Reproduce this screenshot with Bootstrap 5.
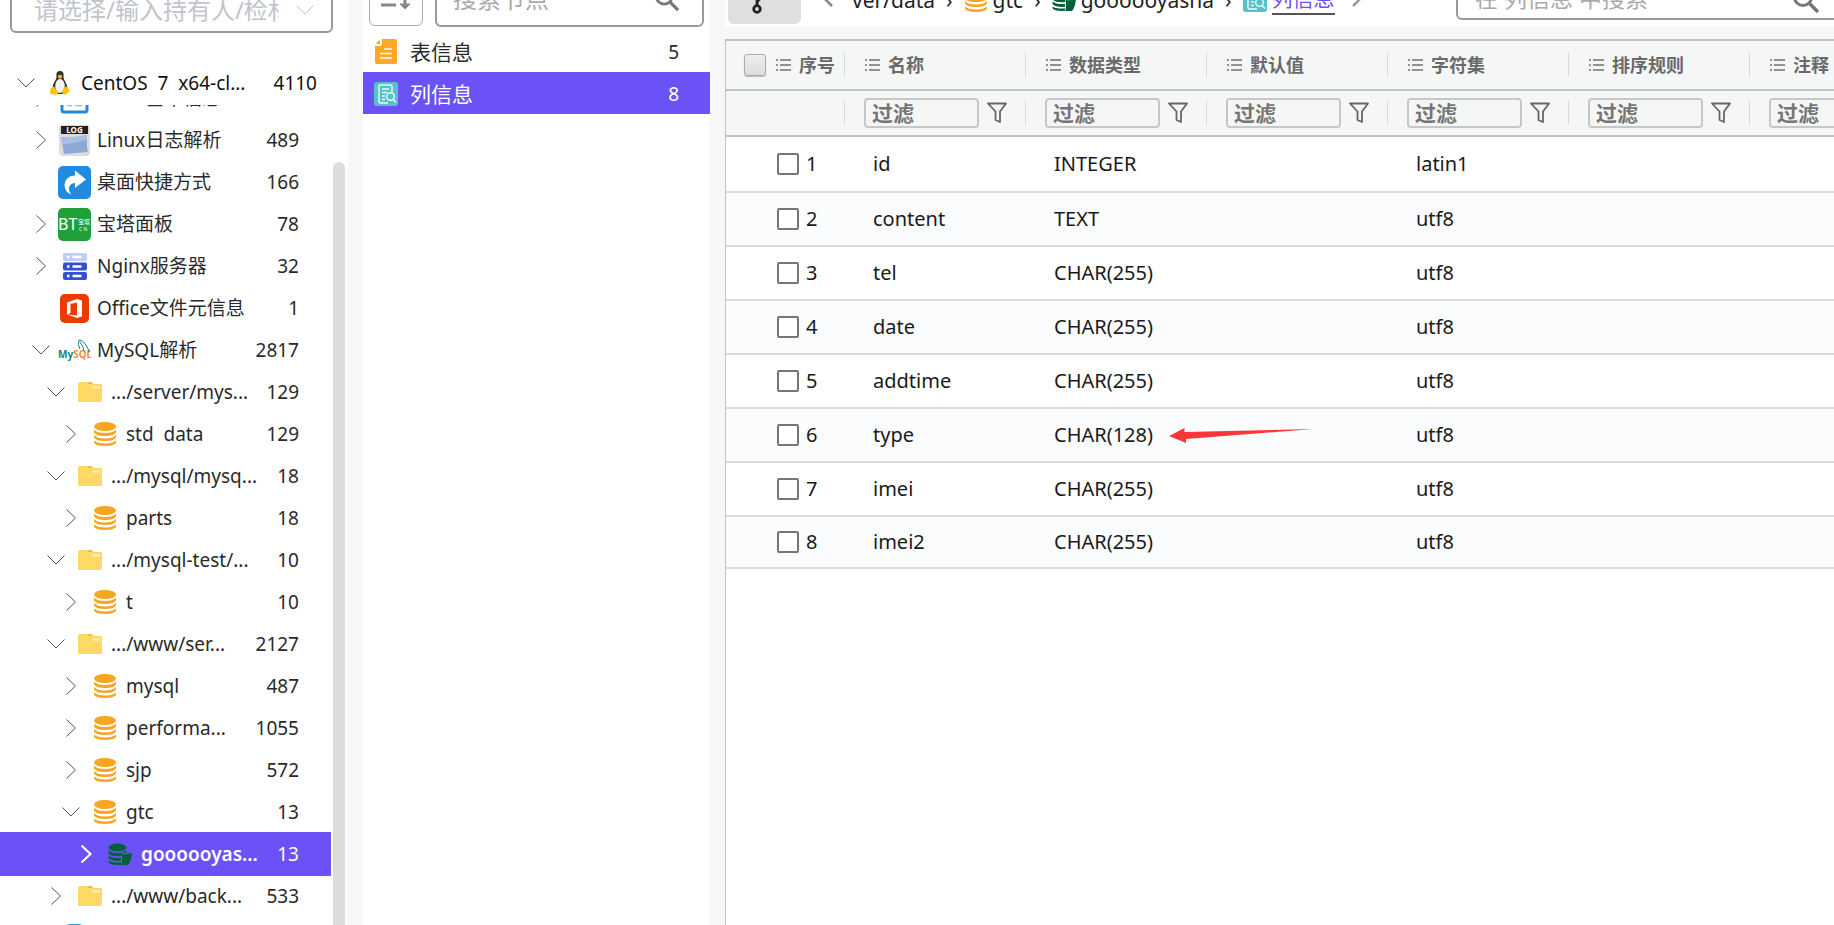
<!DOCTYPE html>
<html lang="zh-CN">
<head>
<meta charset="utf-8">
<meta name="viewport" content="width=device-width, initial-scale=1">
<title>列信息</title>
<link href="https://cdn.jsdelivr.net/npm/bootstrap@5.3.0/dist/css/bootstrap.min.css" rel="stylesheet">
<style>
:root{--accent:#6b52f6;--line:#bdc3c7}
body{background:#f7f7f7;color:#2a2a2a;font-family:"Noto Sans","Noto Sans CJK SC",sans-serif;font-size:19px;line-height:28px}
svg{flex:none;display:block}
a{color:inherit;text-decoration:none}
input::placeholder{opacity:1}
.bare{border:0;background:none;padding:0;outline:0;min-width:0}
/* holder tree */
.side{width:348px}
.side-top{height:33px;padding:0 15px 0 10px}
.combo{height:46px;border:2px solid #999;border-radius:6px;padding:0 17px 0 22px}
.combo input{font-size:24px;color:#c0c4cc;width:245px}
.combo input::placeholder{color:#c0c4cc}
.rootrow{height:45px;padding:0 16px 0 17px;margin-top:27px;margin-right:15px;color:#111}
.tree{width:330px}
.track{width:12px;background:#dcdcdc;border-radius:6px 6px 0 0;margin:57px 3px 0 0}
.peek{height:14px}
.trow{height:42px;padding-right:31px;width:330px;white-space:nowrap}
.l1{padding-left:32px}.l2{padding-left:47px}.l3{padding-left:62px}.l4{padding-left:77px}
.chev{width:18px;height:18px;fill:none;stroke:#555;stroke-width:1}
.big{width:33px;height:33px;margin:0 6px 0 8px}
.small-ic{width:24px;height:26px;margin:0 9px 0 13px}
.picked{background:var(--accent);color:#fff}
.trow.picked{box-shadow:0 0 0 1px var(--accent)}
.trow.picked span:first-of-type{font-weight:600}
.picked .chev{stroke:#fff;stroke-width:2}
/* node list */
.nodes{width:347px;margin:0 15px}
.nodes-top{height:27px;padding:0 6px}
.sort{width:54px;height:56px;border:1px solid #aaa;border-radius:6px;margin-bottom:1px;padding:0}
.find{border:2px solid #999;border-radius:6px;color:#777}
.find input{font-size:24px;color:#aaa}
.find input::placeholder{color:#aaa}
.find-node{height:56px;padding:0 22px 0 16px;margin-left:12px}
.nrow{height:42px;padding:2px 31px 0 11px;font-size:21px}
.nrow .ms-auto{font-size:19px}
.nrow.picked{color:#fff}
.nrow svg{width:24px;height:26px;margin-right:12px}
/* path bar */
.pathbar{height:27px;font-size:21px;line-height:30px;white-space:nowrap}
.branch{width:73px;height:60px;background:#dfdfdf;border:0;border-radius:6px;margin:0 0 3px 3px;padding:0}
.crumbs{margin-bottom:12px;padding-left:20px;color:#222}
.crumbs svg{margin-bottom:2px}
.crumbs a{margin-left:5px}
.sep{padding:0 11px}
.now{color:var(--accent);border-bottom:2px solid #555}
.find-col{width:400px;height:44px;margin:0 -22px 7px 0;padding:0 34px 0 17px}
.find-col input{font-size:23px}
/* grid */
.gridbox{margin-top:12px;border-left:1px solid var(--line)}
.grid{width:1205px;table-layout:fixed;border-collapse:separate;border-spacing:0;color:#1a1a1a;font-size:20px}
.grid th{background:#f5f7f7;border-bottom:2px solid var(--line);padding:0;color:#6a6a6a;font-size:18px;font-weight:700}
.heads th{border-top:2px solid var(--line);height:52px}
.filters th{height:46px}
.slot{height:24px;padding-left:20px;border-right:1px solid #d5d8da}
.grid th:first-child .slot{padding-left:18px}
.grid td{height:54px;padding:0 0 0 28px;border-bottom:2px solid #d9dcdf;background:#fff}
.grid td:first-child{padding-left:51px}
.grid tbody tr:first-child td{height:56px}
.grid tbody tr:last-child td{height:52px}
.grid tbody tr:nth-child(even) td{background:#fbfcfe}
.tick{appearance:none;width:22px;height:22px;border:2px solid #767676;border-radius:2px;margin:0 7px 0 0;background:#fff;flex:none}
.tick-all{border:1px solid #aaa;border-radius:3px;background:linear-gradient(#eee,#dcdcdc);box-shadow:0 1px 1px #bbb;margin-right:10px}
.filt{width:115px;height:30px;border:2px solid #c6c8c8;border-radius:4px;background:#f5f7f7;padding:0 6px;font-size:21px;font-weight:700;color:#757575;margin-left:-1px}
.filt::placeholder{color:#757575}
.funnel{width:20px;height:22px;margin-left:8px}
.pointer{left:143px;top:18px}
</style>
</head>
<body>
<svg width="0" height="0" class="position-absolute" aria-hidden="true">
<symbol id="dn" viewBox="0 0 18 18"><path d="M.5 4.500 9 13l8.500-8.500"/></symbol>
<symbol id="rt" viewBox="0 0 18 18"><path d="M4.500 .500 13.500 9l-9 8.500"/></symbol>
<symbol id="folder" viewBox="0 0 24 26"><path d="M0 4.500q0-1.500 1.500-1.500H13l3 2h7q1 0 1 1v16q0 1-1 1H1q-1 0-1-1z" fill="#ffd966"/><path d="M9 3h4l2 2h-5z" fill="#f6b15c"/><path d="M14.500 7.500h7v2h-7z" fill="#fff3cf"/></symbol>
<symbol id="db" viewBox="0 0 24 26"><g fill="#f6a623"><ellipse cx="12" cy="5.500" rx="11" ry="4.500"/><path d="M1 8.500q3 3.500 11 3.500t11-3.500v3q-2 3.500-11 3.500T1 11.500zM1 14q3 3.500 11 3.500T23 14v2.500q-2 3.500-11 3.500T1 16.500zM1 19.500q3 3 11 3t11-3V22q-2 3-11 3T1 22z"/></g></symbol>
<symbol id="tbl" viewBox="0 0 24 26"><g fill="#05603a"><ellipse cx="9.500" cy="6.500" rx="9" ry="4"/><path d="M.5 9q2 3 9 3t9-3v3h-5v3q-11 1-13-3zM.5 14.500q3 3 12.500 2.500v3q-10 .500-12.500-3zM.5 19.500q3 2.500 13 2v2.300q-11 .700-13-2.500z"/><path d="M14 13q5 .500 10-1-1 9-4 12h-6z"/></g></symbol>
<symbol id="cols" viewBox="0 0 24 26"><rect y="1" width="24" height="24" rx="3" fill="#56c1c7"/><g fill="none" stroke="#e6ffff" stroke-width="1.400"><path d="M14 22H6.500Q5 22 5 20.500v-15Q5 4 6.500 4h10Q18 4 18 5.500V11M8 8h7M8 11.500h5M8 15h3M8 18.500h3"/><circle cx="16.500" cy="15.500" r="3.800"/><path d="m19 18.500 3 3"/></g></symbol>
<symbol id="doc" viewBox="0 0 24 26"><path d="M8 0h13q2 0 2 2v21q0 2-2 2H3q-2 0-2-2V7h5q2 0 2-2z" fill="#ffa726"/><path d="M1.500 5 6 .500V5z" fill="#ffa726"/><path d="M10 10h8M6 14.500h12M6 19h12" stroke="#fff" stroke-width="1.600"/></symbol>
<symbol id="list" viewBox="0 0 15 14"><path d="M0 2h2M0 7h2M0 12h2M4 2h11M4 7h11M4 12h11" stroke="#707070" stroke-width="1.500"/></symbol>
<symbol id="fun" viewBox="0 0 20 22"><path d="M1 1.500h18L13 9.500V20l-4.500-2V9.500z" fill="none" stroke="#666" stroke-width="1.800" stroke-linejoin="round"/></symbol>
<symbol id="mag" viewBox="0 0 28 28"><circle cx="11" cy="11" r="8.500" fill="none" stroke="currentColor" stroke-width="3"/><path d="m17 17 9 9" stroke="currentColor" stroke-width="3.500"/></symbol>
</svg>

<div class="d-flex vh-100 overflow-hidden">
<aside class="side bg-white flex-shrink-0 d-flex flex-column">
  <div class="side-top d-flex align-items-end overflow-hidden flex-shrink-0">
    <div class="combo d-flex align-items-center justify-content-between flex-fill">
      <input class="bare" aria-label="持有人" placeholder="请选择/输入持有人/检材">
      <svg class="chev" style="stroke:#c0c4cc"><use href="#dn"/></svg>
    </div>
  </div>
  <a href="#" class="rootrow d-flex align-items-center flex-shrink-0">
    <svg class="chev"><use href="#dn"/></svg>
    <svg width="20" height="24" viewBox="0 0 20 24" style="margin:0 11px 0 15px"><path d="M10 0C7 0 6 2 6.500 6c0 3-4 6-4 12l4 5h7l4-5c0-5-4-9-4-12C14 2 13 0 10 0z" fill="#2d3436"/><ellipse cx="10" cy="15" rx="4.800" ry="7" fill="#f4f4f4"/><path d="M8 4.500q2-1.500 4 0v2l-2 1.500-2-1.500z" fill="#f7b500"/><path d="M4 15.500 8.500 22q-1 2.500-4 1.500l-4.500-1 .500-5zM16 15.500l-3.500 3v4q1 2 3.500 1l4-3.500-2.500-4z" fill="#ffc107"/></svg>
    <span>CentOS&nbsp; 7&nbsp; x64-cl...</span><span class="ms-auto">4110</span>
  </a>
  <div class="d-flex flex-fill overflow-hidden justify-content-between" style="min-height:0">
  <nav class="tree">
    <div class="peek overflow-hidden d-flex align-items-end"><a href="#" class="trow l1 d-flex align-items-center flex-shrink-0"><svg class="chev"><use href="#rt"/></svg><svg class="big" viewBox="0 0 33 33"><rect x="4" y="4" width="25" height="26" rx="2" fill="#fff" stroke="#2389e0" stroke-width="3"/><path d="M9 23.500h5M17 23.500h7" stroke="#8ec5f3" stroke-width="2"/></svg><span>Linux基本信息</span></a></div>
    <a href="#" class="trow l1 d-flex align-items-center"><svg class="chev"><use href="#rt"/></svg><svg class="big" viewBox="0 0 33 33"><rect x="1" y="1" width="31" height="31" rx="4" fill="#dcdcdc"/><path d="M3 2h27v8H3z" fill="#222"/><text x="16.500" y="9" font-size="8" font-weight="700" fill="#fff" text-anchor="middle">LOG</text><path d="M3 13q13 1 26-2v12l1 5-24 2z" fill="#8ea9d8"/><path d="M3 13q13 1 26-2v5L4 21z" fill="#a9bfe4"/></svg><span>Linux日志解析</span><span class="ms-auto">489</span></a>
    <a href="#" class="trow l1 d-flex align-items-center"><span style="width:18px"></span><svg class="big" viewBox="0 0 33 33"><rect width="33" height="33" rx="5" fill="#218be0"/><path d="M17 4.500 28 13.500 17 22v-5q-6 .500-6 6 0 3 2.500 5.500-7-2-7-9.500Q7 10 17 9.500z" fill="#fff"/></svg><span>桌面快捷方式</span><span class="ms-auto">166</span></a>
    <a href="#" class="trow l1 d-flex align-items-center"><svg class="chev"><use href="#rt"/></svg><svg class="big" viewBox="0 0 33 33"><rect width="33" height="33" rx="5" fill="#1fa038"/><text x="0" y="22" font-size="16" fill="#fff">BT</text><text x="20" y="16" font-size="6" fill="#fff">宝塔</text><text x="21" y="23" font-size="5" fill="#fff">C N</text></svg><span>宝塔面板</span><span class="ms-auto">78</span></a>
    <a href="#" class="trow l1 d-flex align-items-center"><svg class="chev"><use href="#rt"/></svg><svg class="big" viewBox="0 0 33 33"><rect x="5" y="3" width="24" height="8" rx="2" fill="#c3cdf2"/><rect x="5" y="12.500" width="24" height="8" rx="2" fill="#3350d0"/><rect x="5" y="22" width="24" height="8" rx="2" fill="#3350d0"/><path d="M9 7h2.500M14.500 7h9M9 16.500h2.500M14.500 16.500h9M9 26h2.500M14.500 26h9" stroke="#fff" stroke-width="2.400"/></svg><span>Nginx服务器</span><span class="ms-auto">32</span></a>
    <a href="#" class="trow l1 d-flex align-items-center"><span style="width:18px"></span><svg class="big" viewBox="0 0 33 33"><rect x="2" y="2" width="29" height="29" rx="5" fill="#eb3c00"/><path d="M9 10.500 19 7l5 1.500v16L19 26 9 22.500l10 1V10.500l-6.500 1.500v9L9 22.500z" fill="#fff"/></svg><span>Office文件元信息</span><span class="ms-auto">1</span></a>
    <a href="#" class="trow l1 d-flex align-items-center"><svg class="chev"><use href="#dn"/></svg><svg class="big" viewBox="0 0 33 33"><text x="0" y="24" font-size="10" font-weight="700" fill="#13807c">My<tspan fill="#f29132">SQL</tspan></text><path d="M22 15q-3-5-1-9 4 0 7 5l2 4 2 2-2 1M22 8q3 3 4 9" fill="none" stroke="#13807c"/></svg><span>MySQL解析</span><span class="ms-auto">2817</span></a>
    <a href="#" class="trow l2 d-flex align-items-center"><svg class="chev"><use href="#dn"/></svg><svg class="small-ic"><use href="#folder"/></svg><span>.../server/mys...</span><span class="ms-auto">129</span></a>
    <a href="#" class="trow l3 d-flex align-items-center"><svg class="chev"><use href="#rt"/></svg><svg class="small-ic"><use href="#db"/></svg><span>std&nbsp; data</span><span class="ms-auto">129</span></a>
    <a href="#" class="trow l2 d-flex align-items-center"><svg class="chev"><use href="#dn"/></svg><svg class="small-ic"><use href="#folder"/></svg><span>.../mysql/mysq...</span><span class="ms-auto">18</span></a>
    <a href="#" class="trow l3 d-flex align-items-center"><svg class="chev"><use href="#rt"/></svg><svg class="small-ic"><use href="#db"/></svg><span>parts</span><span class="ms-auto">18</span></a>
    <a href="#" class="trow l2 d-flex align-items-center"><svg class="chev"><use href="#dn"/></svg><svg class="small-ic"><use href="#folder"/></svg><span>.../mysql-test/...</span><span class="ms-auto">10</span></a>
    <a href="#" class="trow l3 d-flex align-items-center"><svg class="chev"><use href="#rt"/></svg><svg class="small-ic"><use href="#db"/></svg><span>t</span><span class="ms-auto">10</span></a>
    <a href="#" class="trow l2 d-flex align-items-center"><svg class="chev"><use href="#dn"/></svg><svg class="small-ic"><use href="#folder"/></svg><span>.../www/ser...</span><span class="ms-auto">2127</span></a>
    <a href="#" class="trow l3 d-flex align-items-center"><svg class="chev"><use href="#rt"/></svg><svg class="small-ic"><use href="#db"/></svg><span>mysql</span><span class="ms-auto">487</span></a>
    <a href="#" class="trow l3 d-flex align-items-center"><svg class="chev"><use href="#rt"/></svg><svg class="small-ic"><use href="#db"/></svg><span>performa...</span><span class="ms-auto">1055</span></a>
    <a href="#" class="trow l3 d-flex align-items-center"><svg class="chev"><use href="#rt"/></svg><svg class="small-ic"><use href="#db"/></svg><span>sjp</span><span class="ms-auto">572</span></a>
    <a href="#" class="trow l3 d-flex align-items-center"><svg class="chev"><use href="#dn"/></svg><svg class="small-ic"><use href="#db"/></svg><span>gtc</span><span class="ms-auto">13</span></a>
    <a href="#" class="trow l4 picked d-flex align-items-center"><svg class="chev"><use href="#rt"/></svg><svg class="small-ic"><use href="#tbl"/></svg><span>goooooyas...</span><span class="ms-auto">13</span></a>
    <a href="#" class="trow l2 d-flex align-items-center"><svg class="chev"><use href="#rt"/></svg><svg class="small-ic"><use href="#folder"/></svg><span>.../www/back...</span><span class="ms-auto">533</span></a>
    <a href="#" class="trow l1 d-flex align-items-center" aria-label="下一项"><span style="width:18px"></span><svg class="big" viewBox="0 0 33 33"><rect x="3" y="2" width="27" height="29" rx="10" fill="#1e9be6"/></svg></a>
  </nav>
  <div class="track"></div>
  </div>
</aside>

<section class="nodes bg-white flex-shrink-0">
  <div class="nodes-top d-flex align-items-end overflow-hidden">
    <button class="sort bg-white d-flex justify-content-center align-items-center flex-shrink-0" aria-label="排序"><svg width="32" height="32" viewBox="0 0 32 32" fill="none" stroke="#888" stroke-width="3"><path d="M1 5h8M1 14h11M1 23h15M25 2v22"/><path d="M20 22h10l-5 5z" fill="#888" stroke-width="1"/></svg></button>
    <div class="find find-node d-flex align-items-center flex-fill"><input class="bare flex-fill" style="width:0" aria-label="搜索节点" placeholder="搜索节点"><svg width="26" height="26"><use href="#mag"/></svg></div>
  </div>
  <div style="padding-top:3px">
    <a href="#" class="nrow d-flex align-items-center"><svg><use href="#doc"/></svg><span>表信息</span><span class="ms-auto">5</span></a>
    <a href="#" class="nrow picked d-flex align-items-center"><svg><use href="#cols"/></svg><span>列信息</span><span class="ms-auto">8</span></a>
  </div>
</section>

<main class="flex-fill d-flex flex-column" style="min-width:0">
  <div class="pathbar bg-white d-flex align-items-end overflow-hidden flex-shrink-0">
    <button class="branch flex-shrink-0 d-flex justify-content-center align-items-end" aria-label="分支"><svg width="30" height="40" viewBox="0 0 30 40" fill="none" stroke="#222" stroke-width="2.800" style="margin-bottom:6px"><circle cx="7" cy="31" r="3.300"/><path d="M7 27V8M7 25q1-5 7-5 6-1 7-5"/><circle cx="21" cy="11" r="3.300"/></svg></button>
    <nav class="crumbs d-flex align-items-end flex-shrink-0">
      <svg width="12" height="24" viewBox="0 0 12 24" fill="none" stroke="#888" stroke-width="2.500"><path d="M11 17 1 7 11-3"/></svg>
      <a href="#" style="margin-left:19px">ver/data</a>
      <span class="sep">›</span>
      <svg width="24" height="26"><use href="#db"/></svg><a href="#">gtc</a>
      <span class="sep">›</span>
      <svg width="24" height="26"><use href="#tbl"/></svg><a href="#">goooooyasha</a>
      <span class="sep">›</span>
      <svg width="24" height="26"><use href="#cols"/></svg><a href="#" class="now">列信息</a>
      <svg width="12" height="24" viewBox="0 0 12 24" fill="none" stroke="#999" stroke-width="2.500" style="margin-left:17px"><path d="M1 17 11 7 1-3"/></svg>
    </nav>
    <div class="find find-col ms-auto d-flex align-items-center flex-shrink-0"><input class="bare flex-fill" style="width:0" aria-label="在列信息中搜索" placeholder="在 列信息 中搜索"><svg width="28" height="28" class="mt-1"><use href="#mag"/></svg></div>
  </div>
  <div class="gridbox bg-white flex-fill overflow-hidden">
    <table class="grid">
      <colgroup><col style="width:119px"><col><col><col><col><col><col></colgroup>
      <thead>
        <tr class="heads">
          <th><div class="slot d-flex align-items-center"><input type="checkbox" class="tick tick-all" aria-label="全选"><svg width="15" height="14" class="me-2"><use href="#list"/></svg>序号</div></th>
          <th><div class="slot d-flex align-items-center"><svg width="15" height="14" class="me-2"><use href="#list"/></svg>名称</div></th>
          <th><div class="slot d-flex align-items-center"><svg width="15" height="14" class="me-2"><use href="#list"/></svg>数据类型</div></th>
          <th><div class="slot d-flex align-items-center"><svg width="15" height="14" class="me-2"><use href="#list"/></svg>默认值</div></th>
          <th><div class="slot d-flex align-items-center"><svg width="15" height="14" class="me-2"><use href="#list"/></svg>字符集</div></th>
          <th><div class="slot d-flex align-items-center"><svg width="15" height="14" class="me-2"><use href="#list"/></svg>排序规则</div></th>
          <th><div class="slot d-flex align-items-center"><svg width="15" height="14" class="me-2"><use href="#list"/></svg>注释</div></th>
        </tr>
        <tr class="filters">
          <th><div class="slot"></div></th>
          <th><div class="slot d-flex align-items-center"><input class="filt" placeholder="过滤" aria-label="过滤 名称"><svg class="funnel"><use href="#fun"/></svg></div></th>
          <th><div class="slot d-flex align-items-center"><input class="filt" placeholder="过滤" aria-label="过滤 数据类型"><svg class="funnel"><use href="#fun"/></svg></div></th>
          <th><div class="slot d-flex align-items-center"><input class="filt" placeholder="过滤" aria-label="过滤 默认值"><svg class="funnel"><use href="#fun"/></svg></div></th>
          <th><div class="slot d-flex align-items-center"><input class="filt" placeholder="过滤" aria-label="过滤 字符集"><svg class="funnel"><use href="#fun"/></svg></div></th>
          <th><div class="slot d-flex align-items-center"><input class="filt" placeholder="过滤" aria-label="过滤 排序规则"><svg class="funnel"><use href="#fun"/></svg></div></th>
          <th><div class="slot d-flex align-items-center"><input class="filt" placeholder="过滤" aria-label="过滤 注释"><svg class="funnel"><use href="#fun"/></svg></div></th>
        </tr>
      </thead>
      <tbody>
        <tr><td><label class="d-flex align-items-center"><input type="checkbox" class="tick">1</label></td><td>id</td><td>INTEGER</td><td></td><td>latin1</td><td></td><td></td></tr>
        <tr><td><label class="d-flex align-items-center"><input type="checkbox" class="tick">2</label></td><td>content</td><td>TEXT</td><td></td><td>utf8</td><td></td><td></td></tr>
        <tr><td><label class="d-flex align-items-center"><input type="checkbox" class="tick">3</label></td><td>tel</td><td>CHAR(255)</td><td></td><td>utf8</td><td></td><td></td></tr>
        <tr><td><label class="d-flex align-items-center"><input type="checkbox" class="tick">4</label></td><td>date</td><td>CHAR(255)</td><td></td><td>utf8</td><td></td><td></td></tr>
        <tr><td><label class="d-flex align-items-center"><input type="checkbox" class="tick">5</label></td><td>addtime</td><td>CHAR(255)</td><td></td><td>utf8</td><td></td><td></td></tr>
        <tr><td><label class="d-flex align-items-center"><input type="checkbox" class="tick">6</label></td><td>type</td><td class="position-relative">CHAR(128)<svg class="pointer position-absolute" width="145" height="17" viewBox="0 0 145 17"><path d="M0 9 15.500 1v4L144 2 17 12v4z" fill="#fb3737"/></svg></td><td></td><td>utf8</td><td></td><td></td></tr>
        <tr><td><label class="d-flex align-items-center"><input type="checkbox" class="tick">7</label></td><td>imei</td><td>CHAR(255)</td><td></td><td>utf8</td><td></td><td></td></tr>
        <tr><td><label class="d-flex align-items-center"><input type="checkbox" class="tick">8</label></td><td>imei2</td><td>CHAR(255)</td><td></td><td>utf8</td><td></td><td></td></tr>
      </tbody>
    </table>
  </div>
</main>
</div>
<script src="https://cdn.jsdelivr.net/npm/bootstrap@5.3.0/dist/js/bootstrap.bundle.min.js"></script>
</body>
</html>
